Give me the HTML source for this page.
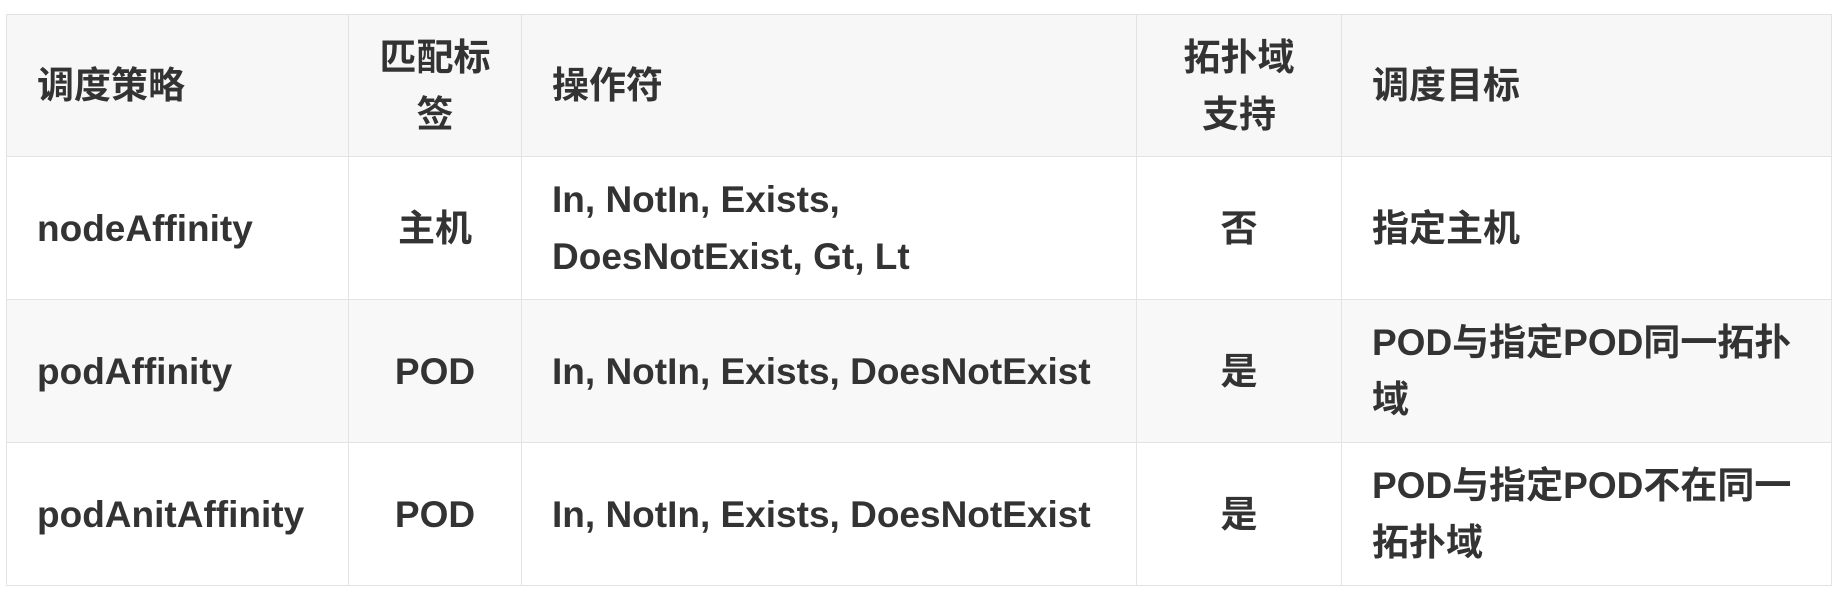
<!DOCTYPE html>
<html><head><meta charset="utf-8"><style>
html,body{margin:0;padding:0;background:#fff;width:1837px;height:610px;overflow:hidden}
table{position:absolute;left:6px;top:14px;border-collapse:collapse;table-layout:fixed;width:1825px;
font-family:"Liberation Sans","Noto Sans CJK SC",sans-serif;font-weight:bold;font-size:37px;color:#333;line-height:57px}
td{border:1.5px solid #e3e3e3;padding:0 30px;vertical-align:middle;white-space:nowrap}
tr.h td{height:141px;background:#f7f7f7}
tr.r td{height:142px}
tr.g td{background:#f8f8f8}
.c{text-align:center;padding:0 10px}
</style></head><body>
<table>
<colgroup><col style="width:342px"><col style="width:173px"><col style="width:615px"><col style="width:205px"><col style="width:490px"></colgroup>
<tr class="h"><td>调度策略</td><td class="c">匹配标<br>签</td><td>操作符</td><td class="c">拓扑域<br>支持</td><td>调度目标</td></tr>
<tr class="r"><td>nodeAffinity</td><td class="c">主机</td><td>In, NotIn, Exists,<br>DoesNotExist, Gt, Lt</td><td class="c">否</td><td>指定主机</td></tr>
<tr class="r g"><td>podAffinity</td><td class="c">POD</td><td>In, NotIn, Exists, DoesNotExist</td><td class="c">是</td><td>POD与指定POD同一拓扑<br>域</td></tr>
<tr class="r"><td>podAnitAffinity</td><td class="c">POD</td><td>In, NotIn, Exists, DoesNotExist</td><td class="c">是</td><td>POD与指定POD不在同一<br>拓扑域</td></tr>
</table>
</body></html>
